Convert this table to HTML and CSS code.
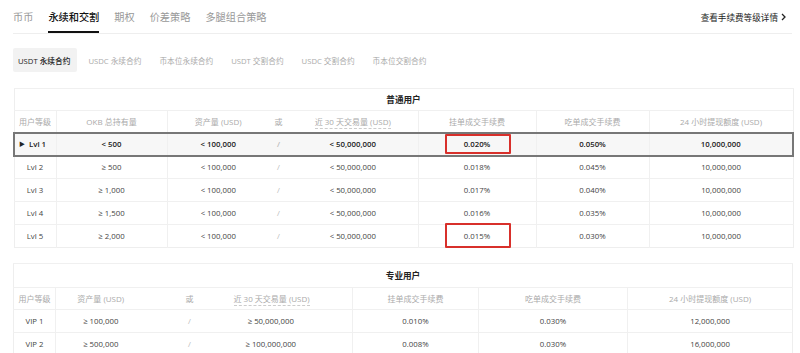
FILE: index.html
```html
<!DOCTYPE html>
<html lang="zh-CN">
<head>
<meta charset="utf-8">
<title>手续费等级</title>
<link rel="stylesheet" href="styles.css">
</head>
<body>
<div class="page">
  <nav class="topnav">
    <div class="navitems">
      <span class="navitem">币币</span>
      <span class="navitem active">永续和交割</span>
      <span class="navitem">期权</span>
      <span class="navitem">价差策略</span>
      <span class="navitem">多腿组合策略</span>
    </div>
    <a class="detail">查看手续费等级详情<svg class="chev" viewBox="0 0 5 8" width="5" height="8"><path d="M1 1 L4 4 L1 7" fill="none" stroke="#222" stroke-width="1.3"/></svg></a>
  </nav>

  <div class="subtabs">
    <span class="subtab selected">USDT 永续合约</span>
    <span class="subtab">USDC 永续合约</span>
    <span class="subtab">币本位永续合约</span>
    <span class="subtab">USDT 交割合约</span>
    <span class="subtab">USDC 交割合约</span>
    <span class="subtab">币本位交割合约</span>
  </div>

  <table class="fee t1">
    <colgroup>
      <col style="width:42px"><col style="width:111px"><col style="width:102px"><col style="width:19px"><col style="width:130px"><col style="width:118px"><col style="width:113px"><col style="width:144px">
    </colgroup>
    <thead>
      <tr class="group"><th colspan="8">普通用户</th></tr>
      <tr class="cols">
        <th>用户等级</th><th class="vl">OKB 总持有量</th><th class="vl">资产量 (USD)</th><th>或</th><th><span class="dotted">近 30 天交易量 (USD)</span></th><th class="vl">挂单成交手续费</th><th class="vl">吃单成交手续费</th><th class="vl">24 小时提现额度 (USD)</th>
      </tr>
    </thead>
    <tbody>
      <tr class="current">
        <td class="lvl"><span class="arrow">▶</span>Lvl 1</td><td class="vl">&lt; 500</td><td class="vl">&lt; 100,000</td><td class="or">/</td><td>&lt; 50,000,000</td><td class="vl mark">0.020%</td><td class="vl">0.050%</td><td class="vl">10,000,000</td>
      </tr>
      <tr><td>Lvl 2</td><td class="vl">≥ 500</td><td class="vl">&lt; 100,000</td><td class="or">/</td><td>&lt; 50,000,000</td><td class="vl">0.018%</td><td class="vl">0.045%</td><td class="vl">10,000,000</td></tr>
      <tr><td>Lvl 3</td><td class="vl">≥ 1,000</td><td class="vl">&lt; 100,000</td><td class="or">/</td><td>&lt; 50,000,000</td><td class="vl">0.017%</td><td class="vl">0.040%</td><td class="vl">10,000,000</td></tr>
      <tr><td>Lvl 4</td><td class="vl">≥ 1,500</td><td class="vl">&lt; 100,000</td><td class="or">/</td><td>&lt; 50,000,000</td><td class="vl">0.016%</td><td class="vl">0.035%</td><td class="vl">10,000,000</td></tr>
      <tr><td>Lvl 5</td><td class="vl">≥ 2,000</td><td class="vl">&lt; 100,000</td><td class="or">/</td><td>&lt; 50,000,000</td><td class="vl mark tall">0.015%</td><td class="vl">0.030%</td><td class="vl">10,000,000</td></tr>
    </tbody>
  </table>

  <table class="fee t2">
    <colgroup>
      <col style="width:42px"><col style="width:90px"><col style="width:88px"><col style="width:119px"><col style="width:126px"><col style="width:149px"><col style="width:165px">
    </colgroup>
    <thead>
      <tr class="group"><th colspan="7">专业用户</th></tr>
      <tr class="cols">
        <th>用户等级</th><th class="vl">资产量 (USD)</th><th>或</th><th class="vol"><span class="dotted">近 30 天交易量 (USD)</span></th><th class="vl">挂单成交手续费</th><th class="vl">吃单成交手续费</th><th class="vl">24 小时提现额度 (USD)</th>
      </tr>
    </thead>
    <tbody>
      <tr><td>VIP 1</td><td class="vl">≥ 100,000</td><td class="or">/</td><td class="vol">≥ 50,000,000</td><td class="vl">0.010%</td><td class="vl">0.030%</td><td class="vl">12,000,000</td></tr>
      <tr><td>VIP 2</td><td class="vl">≥ 500,000</td><td class="or">/</td><td class="vol">≥ 100,000,000</td><td class="vl">0.008%</td><td class="vl">0.030%</td><td class="vl">16,000,000</td></tr>
    </tbody>
  </table>
</div>
</body>
</html>
```

FILE: styles.css
```css
* { box-sizing: border-box; }
html, body { margin: 0; padding: 0; background: #fff; }
body {
  font-family: "Open Sans", "Noto Sans CJK SC", sans-serif;
  color: #333;
  overflow: hidden;
}
.page { padding: 0 8px 0 13px; width: 800px; }

.topnav {
  display: flex;
  justify-content: space-between;
  align-items: flex-end;
  height: 34px;
  border-bottom: 1px solid #eee;
}
.navitems { display: flex; gap: 15px; }
.navitem {
  font-size: 10.2px;
  line-height: 14px;
  color: #999;
  padding-bottom: 7px;
  border-bottom: 2px solid transparent;
  font-family: "Noto Sans CJK SC", sans-serif;
}
.navitem.active { color: #111; border-bottom-color: #111; font-weight: 500; }
.detail {
  display: flex;
  align-items: center;
  gap: 3px;
  font-size: 8.6px;
  color: #222;
  margin-bottom: 10px;
  margin-right: 6px;
  font-family: "Noto Sans CJK SC", sans-serif;
}
.chev { display: block; }

.subtabs {
  display: flex;
  gap: 6px;
  margin-top: 14px;
  height: 24px;
}
.subtab {
  display: flex;
  align-items: center;
  padding: 0 7px 0 5px;
  font-size: 7.7px;
  color: #aaa;
  border-radius: 2px;
}
.subtab.selected { background: #f2f2f2; color: #222; font-weight: 500; }

.fee {
  width: 779px;
  table-layout: fixed;
  border-collapse: collapse;
  border: 1px solid #eee;
  font-size: 8px;
  margin-top: 16px;
}
.fee.t2 { margin-top: 15px; }
.fee th, .fee td {
  text-align: center;
  padding: 0;
  border-top: 1px solid #f0f0f0;
  white-space: nowrap;
}
.fee .vl { border-left: 1px solid #f0f0f0; }
.group th {
  height: 22px;
  font-size: 8.6px;
  font-weight: 700;
  color: #222;
}
.t2 .group th { height: 24px; }
.cols th {
  height: 22px;
  font-weight: 400;
  color: #aaa;
}
.dotted { border-bottom: 1px dashed #ccc; padding-bottom: 1px; }
.fee td { height: 23px; color: #444; font-size: 7.8px; }
.fee td.or { color: #bbb; }
.fee .vol { padding-right: 44px; }

.current td {
  background: #f7f7f7;
  color: #222;
  font-weight: 600;
  border-top: 2px solid #777;
  border-bottom: 2px solid #777;
}
.current td:first-child { border-left: 2px solid #777; }
.current td:last-child { border-right: 2px solid #777; }
.lvl { text-align: left; padding-left: 4px; }
.current td.lvl { text-align: left; padding-left: 4px; }
.arrow { font-size: 6px; margin-right: 4px; color: #222; vertical-align: 1px; }

.mark { position: relative; }
.mark::after {
  content: "";
  position: absolute;
  left: 26px;
  width: 62px;
  top: 0;
  bottom: 1px;
  border: 2px solid #d8302b;
  border-radius: 1px;
}
.mark.tall::after { top: -2px; bottom: -1px; }
```
